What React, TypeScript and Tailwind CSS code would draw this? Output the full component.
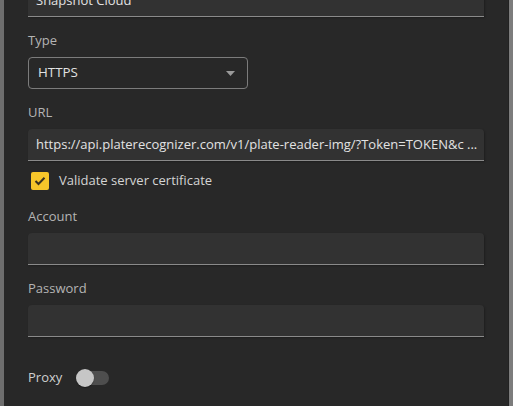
import React from "react";

function Label({ children }: { children: React.ReactNode }) {
  return <div className="h-[18px] text-[13px] leading-[17px] text-[#b4b4b4]">{children}</div>;
}

function Field({ value, className = "" }: { value?: string; className?: string }) {
  return (
    <div
      className={
        "h-[32px] min-w-0 w-full bg-[#323232] border-b border-[#8a8a8a] rounded-t-[4px] pl-2 pr-[6px] flex items-center text-[13px] text-[#e2e2e2] overflow-hidden shadow-[1px_1px_2px_rgba(0,0,0,0.25)] " +
        className
      }
    >
      <span className="block min-w-0 whitespace-nowrap overflow-hidden">{value}</span>
    </div>
  );
}

export default function App() {
  return (
    <div
      className="w-[513px] h-[406px] overflow-hidden flex bg-[#282828]"
      style={{ fontFamily: '"Open Sans", "DejaVu Sans", sans-serif' }}
    >
      <div className="w-[4px] shrink-0 bg-[#6e6e6e]" />
      <div className="flex-1 min-w-0 px-6 flex flex-col">
        <div className="mt-[-15px] shrink-0">
          <Field value="Snapshot Cloud" />
        </div>

        <div className="mt-[15px]">
          <Label>Type</Label>
        </div>
        <div className="mt-[7px] w-[220px] h-[32px] border border-[#7c7c7c] rounded-[4px] pl-[9px] pr-[12px] flex items-center justify-between text-[13.3px] text-[#e2e2e2]">
          <span>HTTPS</span>
          <svg width="9" height="5" viewBox="0 0 9 5">
            <path d="M0 0 L9 0 L4.5 5 Z" fill="#9a9a9a" />
          </svg>
        </div>

        <div className="mt-[15px]">
          <Label>URL</Label>
        </div>
        <div className="mt-[7px] shrink-0">
          <Field value="https://api.platerecognizer.com/v1/plate-reader-img/?Token=TOKEN&c ..." />
        </div>

        <div className="mt-[8px] h-[24px] flex items-center">
          <div className="ml-[3px] w-[18px] h-[18px] rounded-[2px] bg-[#f7c62a] flex items-center justify-center">
            <svg width="12" height="10" viewBox="0 0 12 10">
              <path d="M1.5 5 L4.5 8 L10.5 1.8" fill="none" stroke="#3b3220" strokeWidth="2" />
            </svg>
          </div>
          <span className="ml-[10px] text-[13px] text-[#d4d4d4]">Validate server certificate</span>
        </div>

        <div className="mt-[15px]">
          <Label>Account</Label>
        </div>
        <div className="mt-[7px] shrink-0">
          <Field />
        </div>

        <div className="mt-[15px]">
          <Label>Password</Label>
        </div>
        <div className="mt-[7px] shrink-0">
          <Field />
        </div>

        <div className="mt-[29px] h-[24px] flex items-center">
          <span className="text-[13px] text-[#cfcfcf]">Proxy</span>
          <div className="relative ml-[14px] w-[33px] h-[14px]">
            <div className="absolute left-[1px] top-0 w-[32px] h-[14px] rounded-full bg-[#4e4e4e]" />
            <div className="absolute left-0 top-[-2px] w-[18px] h-[18px] rounded-full bg-[#c6c6c6] shadow-[0_1px_1px_rgba(0,0,0,0.35)]" />
          </div>
        </div>
      </div>
      <div className="w-[1px] shrink-0 bg-[#222222]" />
      <div className="w-[4px] shrink-0 bg-[#7c7c7c]" />
    </div>
  );
}
